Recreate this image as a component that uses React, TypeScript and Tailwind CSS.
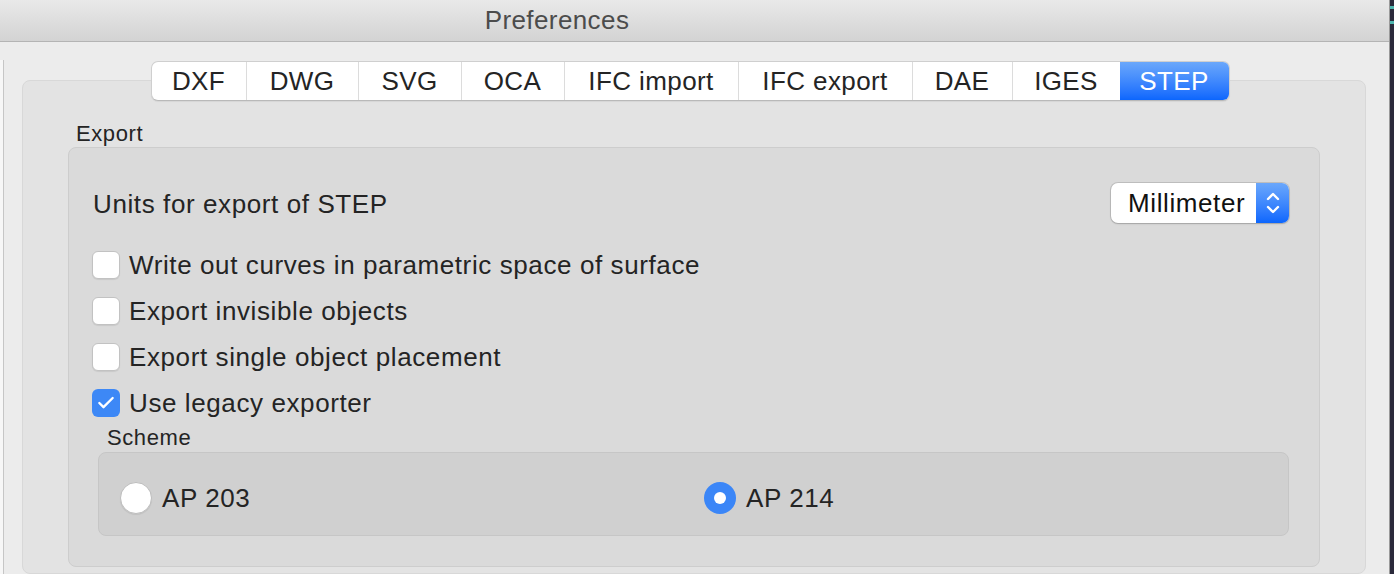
import { Check } from 'lucide-react';

const tabs = ['DXF', 'DWG', 'SVG', 'OCA', 'IFC import', 'IFC export', 'DAE', 'IGES', 'STEP'];
const tabWidths = ['w-[94px]', 'w-[112px]', 'w-[103px]', 'w-[103px]', 'w-[174px]', 'w-[174px]', 'w-[100px]', 'w-[108px]', 'w-[109px]'];

const options = [
  { label: 'Write out curves in parametric space of surface', checked: false },
  { label: 'Export invisible objects', checked: false },
  { label: 'Export single object placement', checked: false },
  { label: 'Use legacy exporter', checked: true },
];

function Checkbox({ checked }: { checked: boolean }) {
  if (checked) {
    return (
      <div className="w-[28px] h-[28px] rounded-[6px] bg-[#3d88f6] flex items-center justify-center shrink-0">
        <Check className="w-[20px] h-[20px] text-white" strokeWidth={2.8} />
      </div>
    );
  }
  return (
    <div className="w-[28px] h-[28px] rounded-[6px] bg-white border border-[#c2c2c2] shadow-[0_1px_1px_rgba(0,0,0,0.08)] shrink-0" />
  );
}

function Radio({ checked }: { checked: boolean }) {
  if (checked) {
    return (
      <div className="w-[32px] h-[32px] rounded-full bg-[#3b86f7] flex items-center justify-center shrink-0">
        <div className="w-[12px] h-[12px] rounded-full bg-white" />
      </div>
    );
  }
  return (
    <div className="w-[32px] h-[32px] rounded-full bg-white border border-[#bdbdbd] shadow-[0_1px_1px_rgba(0,0,0,0.08)] shrink-0" />
  );
}

export default function App() {
  return (
    <div
      className="w-[1394px] h-[574px] overflow-hidden flex text-[#242424] tracking-[0.6px]"
      style={{ fontFamily: '"Liberation Sans", Arial, sans-serif' }}
    >
      <div className="w-[1389px] shrink-0 flex flex-col bg-[#ececec]">
        {/* title bar */}
        <div className="h-[42px] shrink-0 bg-gradient-to-b from-[#e9e9e9] to-[#d3d3d3] border-b border-[#b4b4b4] flex items-center">
          <div className="w-[1114px] text-center text-[26px] text-[#4c4c4c] tracking-[0.4px]">Preferences</div>
        </div>

        <div className="flex-1 flex min-h-0">
          <div className="w-[4px] mt-[18px] bg-[#f7f7f7] border-r border-[#c6c6c6] shrink-0" />

          <div className="flex-1 flex flex-col pl-[18px] pr-[23px] pt-[19px] min-h-0">
            {/* tabs */}
            <div className="flex justify-center pr-[8px] relative z-10">
              <div className="flex h-[40px] rounded-[7px] bg-white border border-[#cfcfcf] border-b-[#b9b9b9] shadow-[0_1px_1px_rgba(0,0,0,0.06)] overflow-hidden tracking-[0.4px]">
                {tabs.map((t, i) => {
                  const active = t === 'STEP';
                  return (
                    <div
                      key={t}
                      className={
                        (active
                          ? 'bg-gradient-to-b from-[#6aa7fb] to-[#0b66fd] text-white '
                          : 'text-[#242424] ') +
                        (i > 0 && !active ? 'border-l border-[#dcdcdc] ' : '') +
                        tabWidths[i] +
                        ' flex items-center justify-center text-[26px]'
                      }
                    >
                      {t}
                    </div>
                  );
                })}
              </div>
            </div>

            {/* tab page */}
            <div className="-mt-[21px] flex-1 bg-[#e3e3e3] border border-[#d8d8d8] rounded-[8px] pl-[45px] pr-[45px] pt-[40px]">
              <div className="text-[22px] leading-[26px] pl-[8px]">Export</div>

              <div className="bg-[#dadada] border border-[#cdcdcd] rounded-[8px] pl-[23px] pr-[30px] pt-[35px] pb-[30px]">
                <div className="flex items-center justify-between h-[40px]">
                  <div className="text-[26px] pl-[1px] pt-[2px]">Units for export of STEP</div>
                  <div className="flex h-[40px] w-[178px] rounded-[7px] bg-white shadow-[0_0_0_1px_rgba(0,0,0,0.12),0_1px_2px_rgba(0,0,0,0.15)] overflow-hidden">
                    <div className="flex-1 flex items-center pl-[17px] text-[26px] text-[#111]">Millimeter</div>
                    <div className="w-[33px] bg-gradient-to-b from-[#6aa7fb] to-[#0b66fd] flex items-center justify-center">
                      <svg width="16" height="26" viewBox="0 0 16 26" fill="none" stroke="white" strokeWidth="2.4" strokeLinecap="round" strokeLinejoin="round">
                        <path d="M3 9 L8 4 L13 9" />
                        <path d="M3 17 L8 22 L13 17" />
                      </svg>
                    </div>
                  </div>
                </div>

                <div className="mt-[28px] flex flex-col gap-[18px]">
                  {options.map((o) => (
                    <div key={o.label} className="flex items-center h-[28px] gap-[9px]">
                      <Checkbox checked={o.checked} />
                      <span className="text-[26px]">{o.label}</span>
                    </div>
                  ))}
                </div>

                <div className="text-[22px] leading-[26px] pl-[15px] mt-[8px]">Scheme</div>

                <div className="mt-[1px] ml-[6px] h-[84px] bg-[#d0d0d0] border border-[#c6c6c6] rounded-[8px] flex items-center pl-[21px] pt-[8px]">
                  <div className="w-[584px] flex items-center gap-[10px]">
                    <Radio checked={false} />
                    <span className="text-[26px]">AP 203</span>
                  </div>
                  <div className="flex items-center gap-[10px]">
                    <Radio checked={true} />
                    <span className="text-[26px]">AP 214</span>
                  </div>
                </div>
              </div>
            </div>
          </div>
        </div>
      </div>

      {/* desktop strip on the right */}
      <div className="flex-1 bg-[#2b2a3b] border-l border-[#9a9a9a] flex flex-col gap-[12px] pt-[6px]">
        <div className="h-[3px] bg-[#4fb6b0]" />
        <div className="h-[3px] bg-[#4fb6b0]" />
      </div>
    </div>
  );
}
